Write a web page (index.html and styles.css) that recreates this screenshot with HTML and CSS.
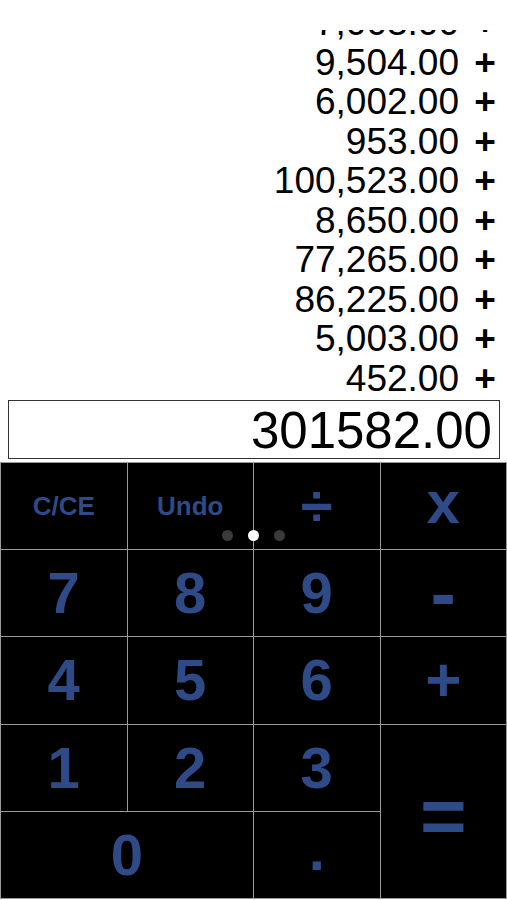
FILE: index.html
```html
<!DOCTYPE html>
<html lang="en">
<head>
  <meta charset="UTF-8">
  <title>Tape Calculator</title>
  <link rel="stylesheet" href="styles.css">
</head>
<body>
  <div class="top-bar"></div>

  <div class="tape">
    <div class="tape-row"><span class="num">7,003.00</span><span class="op">+</span></div>
    <div class="tape-row"><span class="num">9,504.00</span><span class="op">+</span></div>
    <div class="tape-row"><span class="num">6,002.00</span><span class="op">+</span></div>
    <div class="tape-row"><span class="num">953.00</span><span class="op">+</span></div>
    <div class="tape-row"><span class="num">100,523.00</span><span class="op">+</span></div>
    <div class="tape-row"><span class="num">8,650.00</span><span class="op">+</span></div>
    <div class="tape-row"><span class="num">77,265.00</span><span class="op">+</span></div>
    <div class="tape-row"><span class="num">86,225.00</span><span class="op">+</span></div>
    <div class="tape-row"><span class="num">5,003.00</span><span class="op">+</span></div>
    <div class="tape-row"><span class="num">452.00</span><span class="op">+</span></div>
  </div>

  <div class="display">301582.00</div>

  <div class="keypad">
    <button class="key small">C/CE</button>
    <button class="key small">Undo</button>
    <button class="key">÷</button>
    <button class="key times">x</button>

    <button class="key">7</button>
    <button class="key">8</button>
    <button class="key">9</button>
    <button class="key minus">-</button>

    <button class="key">4</button>
    <button class="key">5</button>
    <button class="key">6</button>
    <button class="key plus">+</button>

    <button class="key">1</button>
    <button class="key">2</button>
    <button class="key">3</button>
    <button class="key equals">=</button>

    <button class="key zero">0</button>
    <button class="key dot-key">.</button>

    <div class="pager">
      <span class="dot"></span>
      <span class="dot active"></span>
      <span class="dot"></span>
    </div>
  </div>
</body>
</html>
```

FILE: styles.css
```css
body {
  margin: 0;
  width: 507px;
  height: 900px;
  overflow: hidden;
  background: #ffffff;
  font-family: "Liberation Sans", Arial, sans-serif;
}

.top-bar {
  height: 30px;
  background: #ffffff;
}

.tape {
  height: 368px;
  overflow: hidden;
  display: flex;
  flex-direction: column;
  justify-content: flex-end;
  padding-right: 10px;
}

.tape-row {
  display: flex;
  justify-content: flex-end;
  align-items: baseline;
  font-size: 37px;
  line-height: 39.5px;
  color: #000;
}

.tape-row .op {
  font-weight: bold;
  width: 24px;
  margin-left: 14px;
  text-align: center;
}

.display {
  margin: 2px 7px 0 8px;
  height: 57px;
  border: 1.5px solid #333;
  font-size: 51px;
  line-height: 59px;
  text-align: right;
  padding-right: 7px;
  color: #000;
}

.keypad {
  position: relative;
  margin-top: 3px;
  height: 437px;
  box-sizing: border-box;
  padding: 1px;
  background: #9a9a9a;
  display: grid;
  grid-template-columns: repeat(4, minmax(0, 1fr));
  grid-template-rows: repeat(5, minmax(0, 1fr));
  gap: 1px;
}

.key {
  background: #000;
  border: none;
  margin: 0;
  padding: 0;
  min-height: 0;
  color: #2e4a87;
  font-family: "Liberation Sans", Arial, sans-serif;
  font-weight: bold;
  font-size: 58px;
  line-height: 1;
  display: flex;
  align-items: center;
  justify-content: center;
  cursor: pointer;
}

.key.small {
  font-size: 26px;
}

.key.times {
  font-size: 60px;
  padding-bottom: 6px;
}

.key.minus {
  font-size: 76px;
}

.key.plus {
  font-size: 62px;
}

.key.equals {
  grid-row: span 2;
  font-size: 80px;
  padding-top: 10px;
}

.key.zero {
  grid-column: span 2;
}

.key.dot-key {
  padding-bottom: 10px;
}

.pager {
  position: absolute;
  left: 222px;
  top: 68px;
  display: flex;
  gap: 15px;
}

.dot {
  width: 11px;
  height: 11px;
  border-radius: 50%;
  background: #3a3a3a;
}

.dot.active {
  background: #ffffff;
}
```
